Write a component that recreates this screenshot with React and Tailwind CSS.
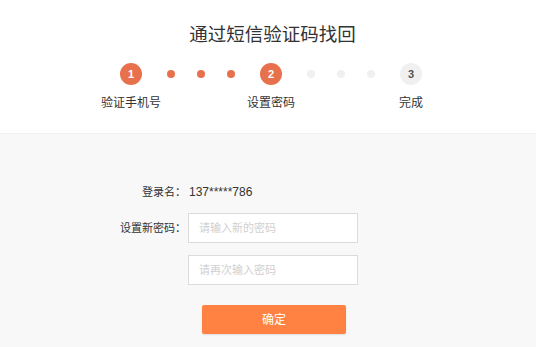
function Step({ n, label, active }) {
  return (
    <div className="w-[22px] flex flex-col items-center">
      <div
        className={
          active
            ? 'w-[22px] h-[22px] rounded-full bg-[#e8714d] text-white text-[11px] font-bold flex items-center justify-center'
            : 'w-[22px] h-[22px] rounded-full bg-[#f0f0f0] text-[#555] text-[11px] font-bold flex items-center justify-center'
        }
      >
        {n}
      </div>
      <span className="mt-[10px] whitespace-nowrap text-[12px] leading-[16px] text-[#333]">{label}</span>
    </div>
  );
}

function Dots({ active }) {
  const c = active ? 'w-[8px] h-[8px] rounded-full bg-[#e8714d]' : 'w-[8px] h-[8px] rounded-full bg-[#f0f0f0]';
  return (
    <div className="h-[22px] flex items-center gap-[22px] mx-[25px]">
      <span className={c} />
      <span className={c} />
      <span className={c} />
    </div>
  );
}

export default function App() {
  const font = { fontFamily: '"Liberation Sans", "Noto Sans CJK SC", sans-serif' };
  return (
    <div className="w-[536px] h-[347px] overflow-hidden bg-white" style={font}>
      <div className="h-[134px] bg-white border-b border-[#f0f0f0] flex flex-col items-center">
        <h1 className="mt-[23px] text-[18.5px] leading-[24px] text-[#333] ml-[9px]">通过短信验证码找回</h1>
        <div className="mt-[16px] flex items-start ml-[6px]">
          <Step n="1" label="验证手机号" active />
          <Dots active />
          <Step n="2" label="设置密码" active />
          <Dots />
          <Step n="3" label="完成" />
        </div>
      </div>
      <div className="h-[213px] bg-[#f8f8f8] pt-[49px]">
        <div className="flex items-center h-[18px]">
          <span className="w-[186px] text-right text-[11px] text-[#333]">登录名：</span>
          <span className="ml-[3px] text-[12px] text-[#333]">137*****786</span>
        </div>
        <div className="mt-[12px] flex items-center">
          <span className="w-[186px] text-right text-[11px] text-[#333]">设置新密码：</span>
          <input
            className="ml-[2px] w-[170px] h-[30px] bg-white border border-[#dcdcdc] px-[10px] text-[11px] outline-none placeholder:text-[#d0d0d0]"
            placeholder="请输入新的密码"
            type="password"
          />
        </div>
        <div className="mt-[12px] flex items-center">
          <span className="w-[186px]" />
          <input
            className="ml-[2px] w-[170px] h-[30px] bg-white border border-[#dcdcdc] px-[10px] text-[11px] outline-none placeholder:text-[#d0d0d0]"
            placeholder="请再次输入密码"
            type="password"
          />
        </div>
        <div className="mt-[20px] flex">
          <button
            type="button"
            className="ml-[202px] w-[144px] h-[29px] rounded-[2px] bg-[#ff8242] text-white text-[12px] shadow-[0_1px_2px_rgba(0,0,0,0.1)]"
          >
            确定
          </button>
        </div>
      </div>
    </div>
  );
}
